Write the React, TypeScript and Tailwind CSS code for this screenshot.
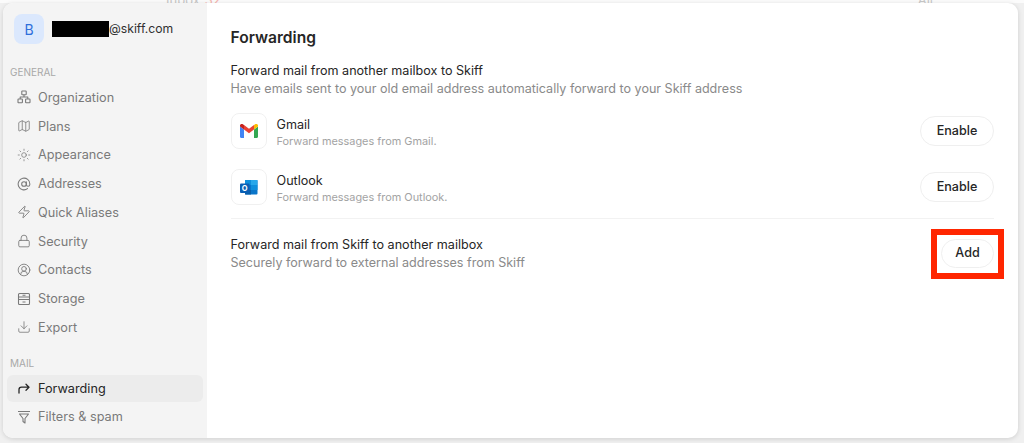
import React from "react";
import { Map, Sun, AtSign, Zap, Lock, CircleUserRound, Download } from "lucide-react";

const Org = () => (
  <svg width="14" height="14" viewBox="0 0 14 14" fill="none" stroke="currentColor" strokeWidth="1.1" strokeLinejoin="round">
    <rect x="4.800" y="1" width="4.400" height="3.800" rx=".6" />
    <rect x="1" y="9" width="4.400" height="3.800" rx=".6" />
    <rect x="8.600" y="9" width="4.400" height="3.800" rx=".6" />
    <path d="M7 4.800V7M3.200 9V7h7.600v2" />
  </svg>
);
const Storage = () => (
  <svg width="14" height="14" viewBox="0 0 14 14" fill="none" stroke="currentColor" strokeWidth="1.1">
    <rect x="1.500" y="1.500" width="11" height="11" rx="1" />
    <path d="M1.500 5h11M1.500 7.500h11M5.500 3.300h3M5.500 10h3" />
  </svg>
);
const Forward = () => (
  <svg width="14" height="14" viewBox="0 0 14 14" fill="none" stroke="currentColor" strokeWidth="1.3" strokeLinecap="round" strokeLinejoin="round">
    <path d="M2 12V8.500C2 7 3 6.200 4.500 6.200H12M9 3.200l3 3-3 3" />
  </svg>
);
const Filter = () => (
  <svg width="14" height="14" viewBox="0 0 14 14" fill="none" stroke="currentColor" strokeWidth="1.1" strokeLinejoin="round">
    <path d="M1 1.500h12M2.500 4h9L8 8.500V13L6 11.500v-3z" />
  </svg>
);
const Gmail = () => (
  <svg width="18" height="14" viewBox="0 0 18 14">
    <path d="M1.200 14C.5 14 0 13.500 0 12.800V2.500l4 3V14z" fill="#4285F4" />
    <path d="M14 14V5.500l4-3v10.300c0 .7-.5 1.200-1.200 1.200z" fill="#34A853" />
    <path d="M14 5.500V1l1.200-.8C16.400-.6 18 .2 18 1.700v.8z" fill="#FBBC04" />
    <path d="M4 5.500V1l5 3.800L14 1v4.500L9 9.200z" fill="#EA4335" />
    <path d="M0 1.700v.8l4 3V1L2.800.2C1.600-.6 0 .2 0 1.700z" fill="#C5221F" />
  </svg>
);
const Outlook = () => (
  <svg width="18" height="17" viewBox="0 0 18 17">
    <rect x="5" y="1" width="12.500" height="14.500" rx="1" fill="#0a75c9" />
    <rect x="5" y="1" width="6" height="5" fill="#0f8fdc" />
    <rect x="11" y="1" width="6.500" height="5" fill="#28a8ea" />
    <rect x="11" y="6" width="6.500" height="5" fill="#0f8fdc" />
    <rect x="5" y="11" width="6" height="4.500" fill="#0a5fa8" />
    <rect x="0" y="4.500" width="9.500" height="9.500" rx="1" fill="#0a5fb4" />
    <text x="4.750" y="12" textAnchor="middle" fontSize="7.500" fontWeight="700" fill="#fff" fontFamily="Inter, sans-serif">O</text>
  </svg>
);

const general: [string, React.ReactNode][] = [
  ["Organization", <Org />],
  ["Plans", <Map size={14} strokeWidth={1.4} />],
  ["Appearance", <Sun size={14} strokeWidth={1.3} />],
  ["Addresses", <AtSign size={14} strokeWidth={1.8} />],
  ["Quick Aliases", <Zap size={14} strokeWidth={1.5} />],
  ["Security", <Lock size={14} strokeWidth={1.5} />],
  ["Contacts", <CircleUserRound size={14} strokeWidth={1.5} />],
  ["Storage", <Storage />],
  ["Export", <Download size={14} strokeWidth={1.4} />],
];

function NavItem({ label, icon, active }: { label: string; icon: React.ReactNode; active?: boolean }) {
  return (
    <div className={`mb-[2px] flex h-[26.75px] items-center gap-[7px] rounded-[6px] pl-[10px] ${active ? "bg-[#ececec] text-[#262626]" : "text-[#7a7a7a]"}`}>
      <span className="flex w-[14px] justify-center">{icon}</span>
      <span className="text-[12.7px]">{label}</span>
    </div>
  );
}

function Provider({ name, desc, icon }: { name: string; desc: string; icon: React.ReactNode }) {
  return (
    <div className="flex h-[36px] items-center">
      <div className="flex h-[36px] w-[36px] items-center justify-center rounded-[8px] border border-[#f0f0f0] bg-white">{icon}</div>
      <div className="ml-[10px] flex-1 pt-[3px]">
        <div className="text-[12.6px] leading-[17px] text-[#262626]">{name}</div>
        <div className="text-[10.9px] leading-[17px] text-[#a3a3a3]">{desc}</div>
      </div>
      <button className="h-[30px] w-[74px] rounded-[15px] border border-[#efefef] bg-white text-[12.6px] font-medium text-[#262626]">Enable</button>
    </div>
  );
}

export default function App() {
  return (
    <div className="relative h-[443px] w-[1024px] overflow-hidden bg-[#f0f0f0] pb-[5px] pl-[3px] pr-[6px] pt-[3px] font-['Inter',sans-serif]">
      <div className="absolute left-0 right-0 top-0 flex h-[3px] overflow-hidden bg-[#fbfbfb] text-[13px] leading-[0px] text-[#c8c8c8]">
        <span className="ml-[166px]">Inbox</span>
        <span className="ml-[5px] text-[#f5b5b0]">32</span>
        <span className="ml-[697px]">All</span>
      </div>
      <div className="relative flex h-[435px] overflow-hidden rounded-[10px] bg-white shadow-[0_1px_5px_rgba(0,0,0,0.14)]">
        <aside className="w-[204px] shrink-0 bg-[#f4f4f4] px-[4px]">
          <div className="flex h-[52px] items-center pl-[7px]">
            <div className="flex h-[30px] w-[30px] items-center justify-center rounded-[8px] bg-[#dbe8fd] text-[14px] text-[#2f6fdb]">B</div>
            <div className="ml-[8px] h-[16px] w-[57px] bg-black"></div>
            <span className="text-[12.2px] text-[#303030]">@skiff.com</span>
          </div>
          <div className="ml-[3px] mt-[10px] text-[10px] leading-[14px] text-[#a8a8a8]">GENERAL</div>
          <div className="mt-[5px]">
            {general.map(([l, i]) => (
              <NavItem key={l} label={l} icon={i} />
            ))}
          </div>
          <div className="ml-[3px] mt-[15px] text-[10px] leading-[14px] text-[#a8a8a8]">MAIL</div>
          <div className="mt-[5px]">
            <NavItem label="Forwarding" icon={<Forward />} active />
            <NavItem label="Filters & spam" icon={<Filter />} />
          </div>
        </aside>
        <main className="flex-1 pl-[23.5px] pr-[24px]">
          <h1 className="mt-[24px] text-[15.6px] font-semibold leading-[22px] text-[#262626]">Forwarding</h1>
          <div className="mt-[13px] text-[12.6px] leading-[17px] text-[#262626]">Forward mail from another mailbox to Skiff</div>
          <div className="mt-[1px] text-[12.56px] leading-[17px] text-[#8a8a8a]">Have emails sent to your old email address automatically forward to your Skiff address</div>
          <div className="mt-[16px] flex flex-col gap-[20px]">
            <Provider name="Gmail" desc="Forward messages from Gmail." icon={<Gmail />} />
            <Provider name="Outlook" desc="Forward messages from Outlook." icon={<Outlook />} />
          </div>
          <div className="mt-[13px] border-t border-[#f2f2f2]"></div>
          <div className="mt-[17px] flex items-center justify-between">
            <div>
              <div className="text-[12.6px] leading-[17px] text-[#262626]">Forward mail from Skiff to another mailbox</div>
              <div className="mt-[1px] text-[12.56px] leading-[17px] text-[#8a8a8a]">Securely forward to external addresses from Skiff</div>
            </div>
            <div className="relative flex">
              <button className="h-[29px] w-[53px] rounded-[15px] border border-[#efefef] bg-white text-[12.6px] font-medium text-[#262626]">Add</button>
              <div className="absolute -bottom-[11px] -left-[10px] -right-[10px] -top-[10px] border-[6px] border-[#ff2600]"></div>
            </div>
          </div>
        </main>
      </div>
    </div>
  );
}
